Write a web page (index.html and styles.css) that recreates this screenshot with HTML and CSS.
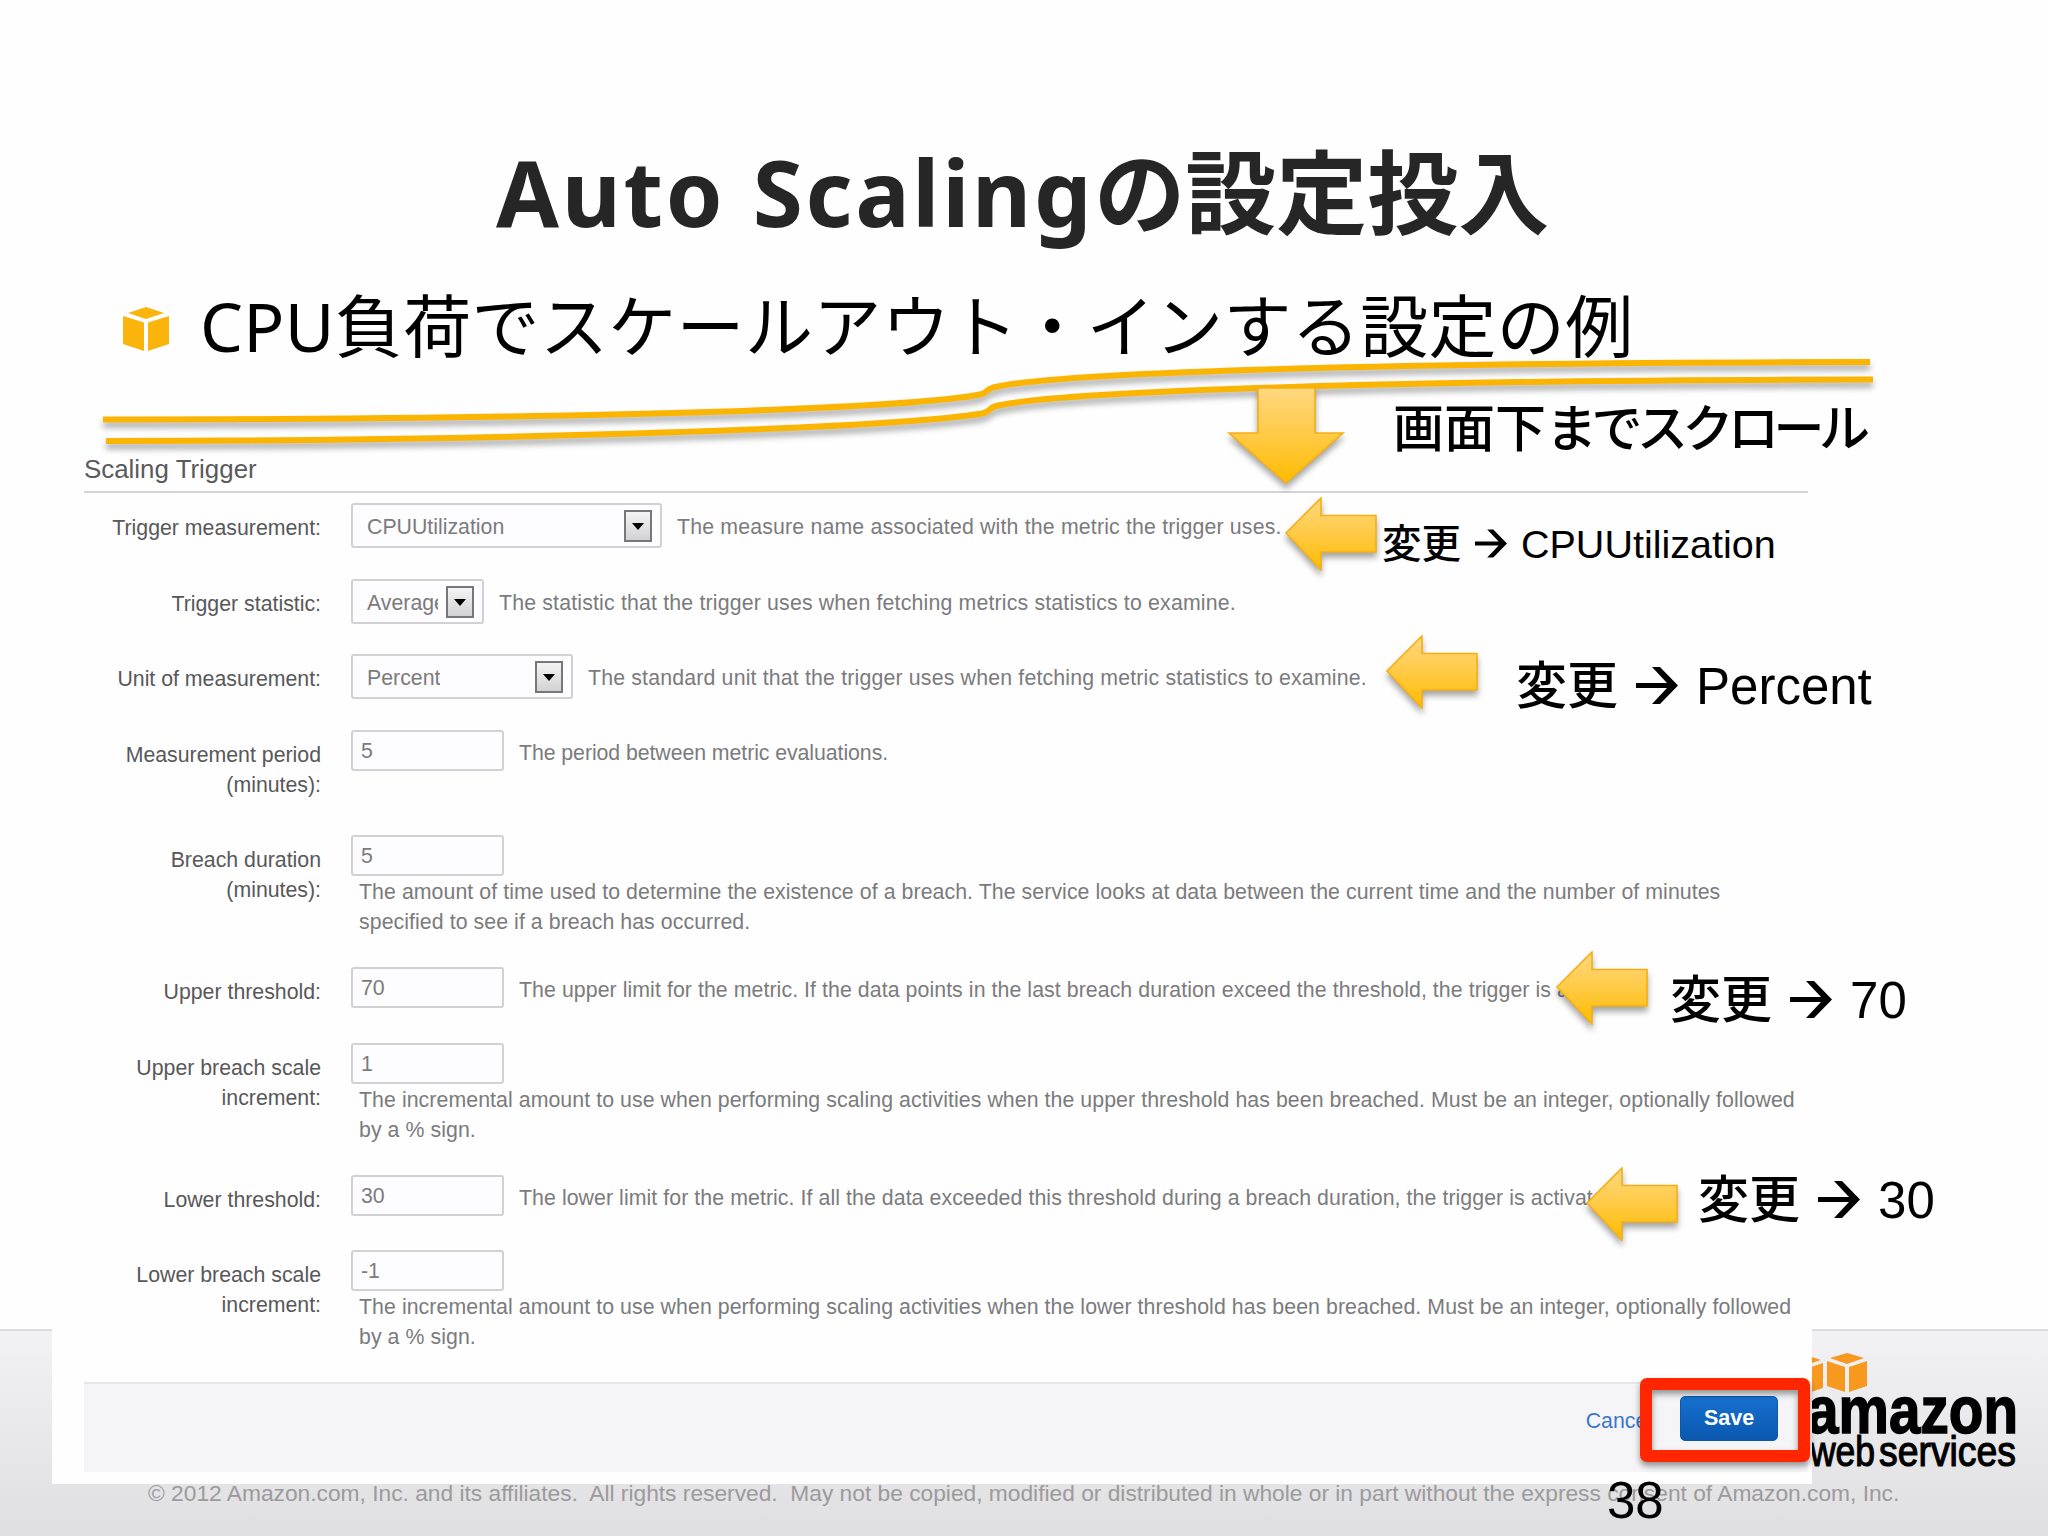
FILE: index.html
```html
<!DOCTYPE html>
<html lang="ja">
<head>
    <meta charset="UTF-8">
    <title>Auto Scalingの設定投入</title>
    <link rel="stylesheet" href="styles.css">
</head>
<body>
    <div class="slide">
        <footer class="slide-footer">
            <svg class="aws-logo" width="248" height="130" viewBox="0 0 248 130">
                <g fill="#f7981f">
                    <path d="M-15 11 L3 5 L21 11 L3 17Z M-17 14 L1 20 V45 L-17 39Z M23 14 L5 20 V45 L23 39Z"/>
                    <path d="M30 9 L47 4 L64 9 L47 15Z M27 12 L45 18 V43 L27 37Z M67 12 L49 18 V43 L67 37Z"/>
                </g>
                <text class="logo-amazon" x="7" y="84" textLength="211" lengthAdjust="spacingAndGlyphs">amazon</text>
                <text class="logo-web" x="10" y="117" textLength="65" lengthAdjust="spacingAndGlyphs">web</text>
                <text class="logo-web" x="79" y="117" textLength="137" lengthAdjust="spacingAndGlyphs">services</text>
            </svg>
            <p class="copyright">© 2012 Amazon.com, Inc. and its affiliates.&nbsp; All rights reserved.&nbsp; May not be copied, modified or distributed in whole or in part without the express consent of Amazon.com, Inc.</p>
        </footer>

        <h1 class="title"><span>Auto Scaling</span>の設定投入</h1>
        <p class="lead">
            <svg class="cube" width="46" height="44" viewBox="0 0 46 44">
                <path d="M5 6 L23 0 L41 6 L23 12Z M0 9 L21 15.500 V44 L0 37Z M46 9 L25 15.500 V44 L46 37Z" fill="#fab40c"/>
            </svg>
            <span>CPU負荷でスケールアウト・インする設定の例</span>
        </p>

        <section class="panel">
            <h2 class="legend">Scaling Trigger</h2>
            <form class="form">
                <div class="row row-select">
                    <label>Trigger measurement:</label>
                    <div class="control">
                        <span class="select select-wide"><span>CPUUtilization</span><i></i></span>
                        <span class="help">The measure name associated with the metric the trigger uses.</span>
                    </div>
                </div>
                <div class="row row-select">
                    <label>Trigger statistic:</label>
                    <div class="control">
                        <span class="select select-small"><span>Average</span><i></i></span>
                        <span class="help">The statistic that the trigger uses when fetching metrics statistics to examine.</span>
                    </div>
                </div>
                <div class="row row-select">
                    <label>Unit of measurement:</label>
                    <div class="control">
                        <span class="select select-medium"><span>Percent</span><i></i></span>
                        <span class="help">The standard unit that the trigger uses when fetching metric statistics to examine.</span>
                    </div>
                </div>
                <div class="row row-label2">
                    <label>Measurement period<br>(minutes):</label>
                    <div class="control">
                        <span class="input">5</span>
                        <span class="help">The period between metric evaluations.</span>
                    </div>
                </div>
                <div class="row row-tall">
                    <label>Breach duration<br>(minutes):</label>
                    <div class="control stacked">
                        <span class="input">5</span>
                        <span class="help">The amount of time used to determine the existence of a breach. The service looks at data between the current time and the number of minutes<br>specified to see if a breach has occurred.</span>
                    </div>
                </div>
                <div class="row">
                    <label>Upper threshold:</label>
                    <div class="control">
                        <span class="input">70</span>
                        <span class="help">The upper limit for the metric. If the data points in the last breach duration exceed the threshold, the trigger is activated.</span>
                    </div>
                </div>
                <div class="row row-tall">
                    <label>Upper breach scale<br>increment:</label>
                    <div class="control stacked">
                        <span class="input">1</span>
                        <span class="help">The incremental amount to use when performing scaling activities when the upper threshold has been breached. Must be an integer, optionally followed<br>by a % sign.</span>
                    </div>
                </div>
                <div class="row">
                    <label>Lower threshold:</label>
                    <div class="control">
                        <span class="input">30</span>
                        <span class="help">The lower limit for the metric. If all the data exceeded this threshold during a breach duration, the trigger is activated.</span>
                    </div>
                </div>
                <div class="row row-last">
                    <label>Lower breach scale<br>increment:</label>
                    <div class="control stacked">
                        <span class="input">-1</span>
                        <span class="help">The incremental amount to use when performing scaling activities when the lower threshold has been breached. Must be an integer, optionally followed<br>by a % sign.</span>
                    </div>
                </div>
                <div class="actions">
                    <a class="cancel">Cancel</a>
                    <button type="button" class="save">Save</button>
                </div>
            </form>
        </section>

        <!-- double swoosh line -->
        <svg class="swoosh" width="2048" height="120" viewBox="0 340 2048 120">
            <g fill="none" stroke="#fbb400" stroke-width="6">
                <path d="M103 419.500 C450 419.500 880 413 980 394.500 C988 393 984 390.500 993 387.500 C1060 371 1420 362.500 1870 362"/>
                <path d="M106 441 C450 441 880 430 982 413.500 C991 412 987 408.500 996 406 C1063 390 1423 380 1873 379.500"/>
            </g>
        </svg>

        <svg class="defs" width="0" height="0">
            <defs>
                <linearGradient id="gold" x1="0" y1="0" x2="0" y2="1">
                    <stop offset="0" stop-color="#ffd880"/>
                    <stop offset="0.5" stop-color="#ffca45"/>
                    <stop offset="1" stop-color="#ffbb00"/>
                </linearGradient>
                <symbol id="arrow-left" viewBox="0 0 92 74">
                    <path d="M1 36 L36 1 V18.500 H91 V55 H36 V73Z" fill="url(#gold)" stroke="#f6ae10" stroke-width="1.600"/>
                </symbol>
                <symbol id="to" viewBox="0 0 42 37">
                    <path d="M0 16 H31 L16 0 H24 L42 18.500 L24 37 H16 L31 21 H0Z"/>
                </symbol>
            </defs>
        </svg>

        <svg class="arrow arrow-down" width="118" height="98" viewBox="0 0 118 98">
            <path d="M31 1 H88 V46 H116 L59 96 L2 46 H31Z" fill="url(#gold)" stroke="#f6ae10" stroke-width="1.600"/>
        </svg>
        <svg class="arrow arrow-1" width="92" height="74"><use href="#arrow-left"/></svg>
        <svg class="arrow arrow-2" width="92" height="74"><use href="#arrow-left"/></svg>
        <svg class="arrow arrow-3" width="92" height="74"><use href="#arrow-left"/></svg>
        <svg class="arrow arrow-4" width="92" height="74"><use href="#arrow-left"/></svg>

        <p class="note note-scroll">画面下<span>までスクロール</span></p>
        <p class="note note-cpu">変更<svg width="32" height="29"><use href="#to"/></svg>CPUUtilization</p>
        <p class="note note-percent">変更<svg width="42" height="37"><use href="#to"/></svg>Percent</p>
        <p class="note note-70">変更<svg width="42" height="37"><use href="#to"/></svg>70</p>
        <p class="note note-30">変更<svg width="42" height="37"><use href="#to"/></svg>30</p>

        <div class="highlight"></div>
        <span class="page-number">38</span>
    </div>
</body>
</html>
```
FILE: styles.css
```css
body {
    margin: 0;
    background: #fefefe;
    font-family: "Liberation Sans", Arial, "Noto Sans CJK JP", sans-serif;
}

h1, h2, p {
    margin: 0;
    font-weight: normal;
}

.slide {
    position: relative;
    width: 2048px;
    height: 1536px;
    overflow: hidden;
    white-space: nowrap;
}

.title {
    padding: 132px 0 0 496px;
    font-family: "Noto Sans", "Noto Sans CJK JP", sans-serif;
    font-size: 91px;
    font-weight: bold;
    line-height: 120px;
    color: #262626;
}

.title span {
    letter-spacing: 2.7px;
    word-spacing: 1px;
}

.lead {
    display: flex;
    align-items: center;
    gap: 31px;
    margin-top: 24px;
    padding-left: 123px;
    font-family: "Noto Sans", "Noto Sans CJK JP", sans-serif;
    font-size: 68px;
    line-height: 100px;
    letter-spacing: 0.35px;
    color: #000;
}

.cube {
    margin-top: 6px;
}

/* form panel */

.panel {
    position: relative;
    width: 1724px;
    height: 1033px;
    margin: 75px 0 0 52px;
    padding: 0 4px 0 32px;
    background: #fefefe;
}

.legend {
    padding-bottom: 4px;
    border-bottom: 2px solid #d4d4d6;
    font-size: 25.9px;
    line-height: 36px;
    color: #5a5a5c;
}

.form {
    padding-top: 10px;
    font-size: 21.3px;
    line-height: 30px;
    color: #7b7b7d;
}

.row {
    display: grid;
    grid-template-columns: 237px 1fr;
    column-gap: 30px;
    height: 75.6px;
}

.row-label2 {
    height: 105.5px;
}

.row-tall {
    height: 132px;
}

.row-last {
    height: 131.5px;
}

.row label {
    padding-top: 10px;
    text-align: right;
    color: #58585a;
}

.control {
    display: flex;
    align-items: flex-start;
}

.control .help {
    padding: 8px 0 0 15px;
    letter-spacing: 0.07px;
}

.row-select .help {
    padding-top: 9px;
    letter-spacing: 0.17px;
}

.row-label2 .help {
    letter-spacing: -0.07px;
}

.stacked {
    flex-direction: column;
}

.stacked .help {
    padding: 1px 0 0 8px;
}

.select,
.input {
    box-sizing: border-box;
    border: 2px solid #d2d0d4;
    border-radius: 3px;
    background: #fdfcfe;
}

.select {
    display: flex;
    justify-content: space-between;
    height: 45px;
    padding: 5px 8px 0 14px;
    line-height: 34px;
}

.select span {
    overflow: hidden;
}

.select i {
    box-sizing: border-box;
    flex: none;
    width: 28px;
    height: 32px;
    border: 2px solid #77777a;
    background: linear-gradient(#f4f4f4, #d2d2d4);
}

.select i::before {
    content: "";
    display: block;
    width: 0;
    margin: 11px 0 0 6px;
    border: 6px solid transparent;
    border-top: 7px solid #000;
    border-bottom: 0;
}

.select-wide {
    width: 311px;
}

.select-small {
    width: 133px;
}

.select-small span {
    width: 71px;
}

.select-medium {
    width: 222px;
}

.input {
    width: 153px;
    height: 41px;
    padding: 4px 0 0 8px;
}

.actions {
    display: flex;
    justify-content: flex-end;
    box-sizing: border-box;
    height: 90px;
    padding: 12px 30px 0 0;
    border-top: 2px solid #e6e5e7;
    background: #f5f4f6;
}

.cancel {
    margin-right: 28px;
    padding-top: 10px;
    color: #3a78cc;
}

.save {
    width: 98px;
    height: 45px;
    padding: 1px 0 0;
    border: 1px solid #0c58ad;
    border-radius: 5px;
    background: linear-gradient(#1670cf, #0a58b0);
    color: #fff;
    font: bold 21.5px "Liberation Sans", Arial, sans-serif;
}

/* slide footer, the panel lies over it */

.slide-footer {
    position: absolute;
    left: 0;
    top: 1329px;
    width: 2048px;
    height: 207px;
    box-sizing: border-box;
    border-top: 2px solid #dddcde;
    background: linear-gradient(#f2f1f3, #dfdee0);
}

.aws-logo {
    position: absolute;
    left: 1800px;
    top: 18px;
}

.logo-amazon {
    font-size: 67px;
    font-weight: bold;
    stroke: #000;
    stroke-width: 1.5px;
}

.logo-web {
    font-size: 43px;
    stroke: #000;
    stroke-width: 1.2px;
}

.copyright {
    padding: 147px 0 0 148px;
    font-size: 22.75px;
    line-height: 30px;
    color: #9b9a9c;
}

/* things drawn on top of the screenshot */

.swoosh {
    position: absolute;
    left: 0;
    top: 340px;
    filter: drop-shadow(0 5px 3px rgba(0, 0, 0, 0.35));
}

.defs {
    position: absolute;
}

.arrow {
    position: absolute;
    overflow: visible;
    filter: drop-shadow(0 5px 3px rgba(0, 0, 0, 0.35));
}

.arrow-down {
    left: 1227px;
    top: 387px;
}

.arrow-1 {
    left: 1285px;
    top: 497px;
}

.arrow-2 {
    left: 1386px;
    top: 635px;
}

.arrow-3 {
    left: 1556px;
    top: 951px;
}

.arrow-4 {
    left: 1586px;
    top: 1167px;
}

.note {
    position: absolute;
    font-size: 51px;
    font-weight: 500;
    line-height: 60px;
    color: #000;
}

.note svg {
    margin: 0 18px 0 18px;
}

.note-scroll {
    left: 1393px;
    top: 400px;
}

.note-scroll span {
    letter-spacing: -5.5px;
}

.note-cpu {
    left: 1382px;
    top: 514px;
    font-size: 39.5px;
}

.note-cpu svg {
    margin: 0 14px 0 14px;
}

.note-percent {
    left: 1516px;
    top: 657px;
}

.note-70 {
    left: 1670px;
    top: 971px;
}

.note-30 {
    left: 1698px;
    top: 1171px;
}

.highlight {
    position: absolute;
    left: 1640px;
    top: 1378px;
    width: 146px;
    height: 60px;
    border: 12.5px solid #ff2600;
    border-radius: 7px;
    filter: drop-shadow(0 4px 3px rgba(0, 0, 0, 0.4));
}

.page-number {
    position: absolute;
    left: 1607px;
    top: 1471px;
    font-size: 51px;
    line-height: 60px;
}
```
